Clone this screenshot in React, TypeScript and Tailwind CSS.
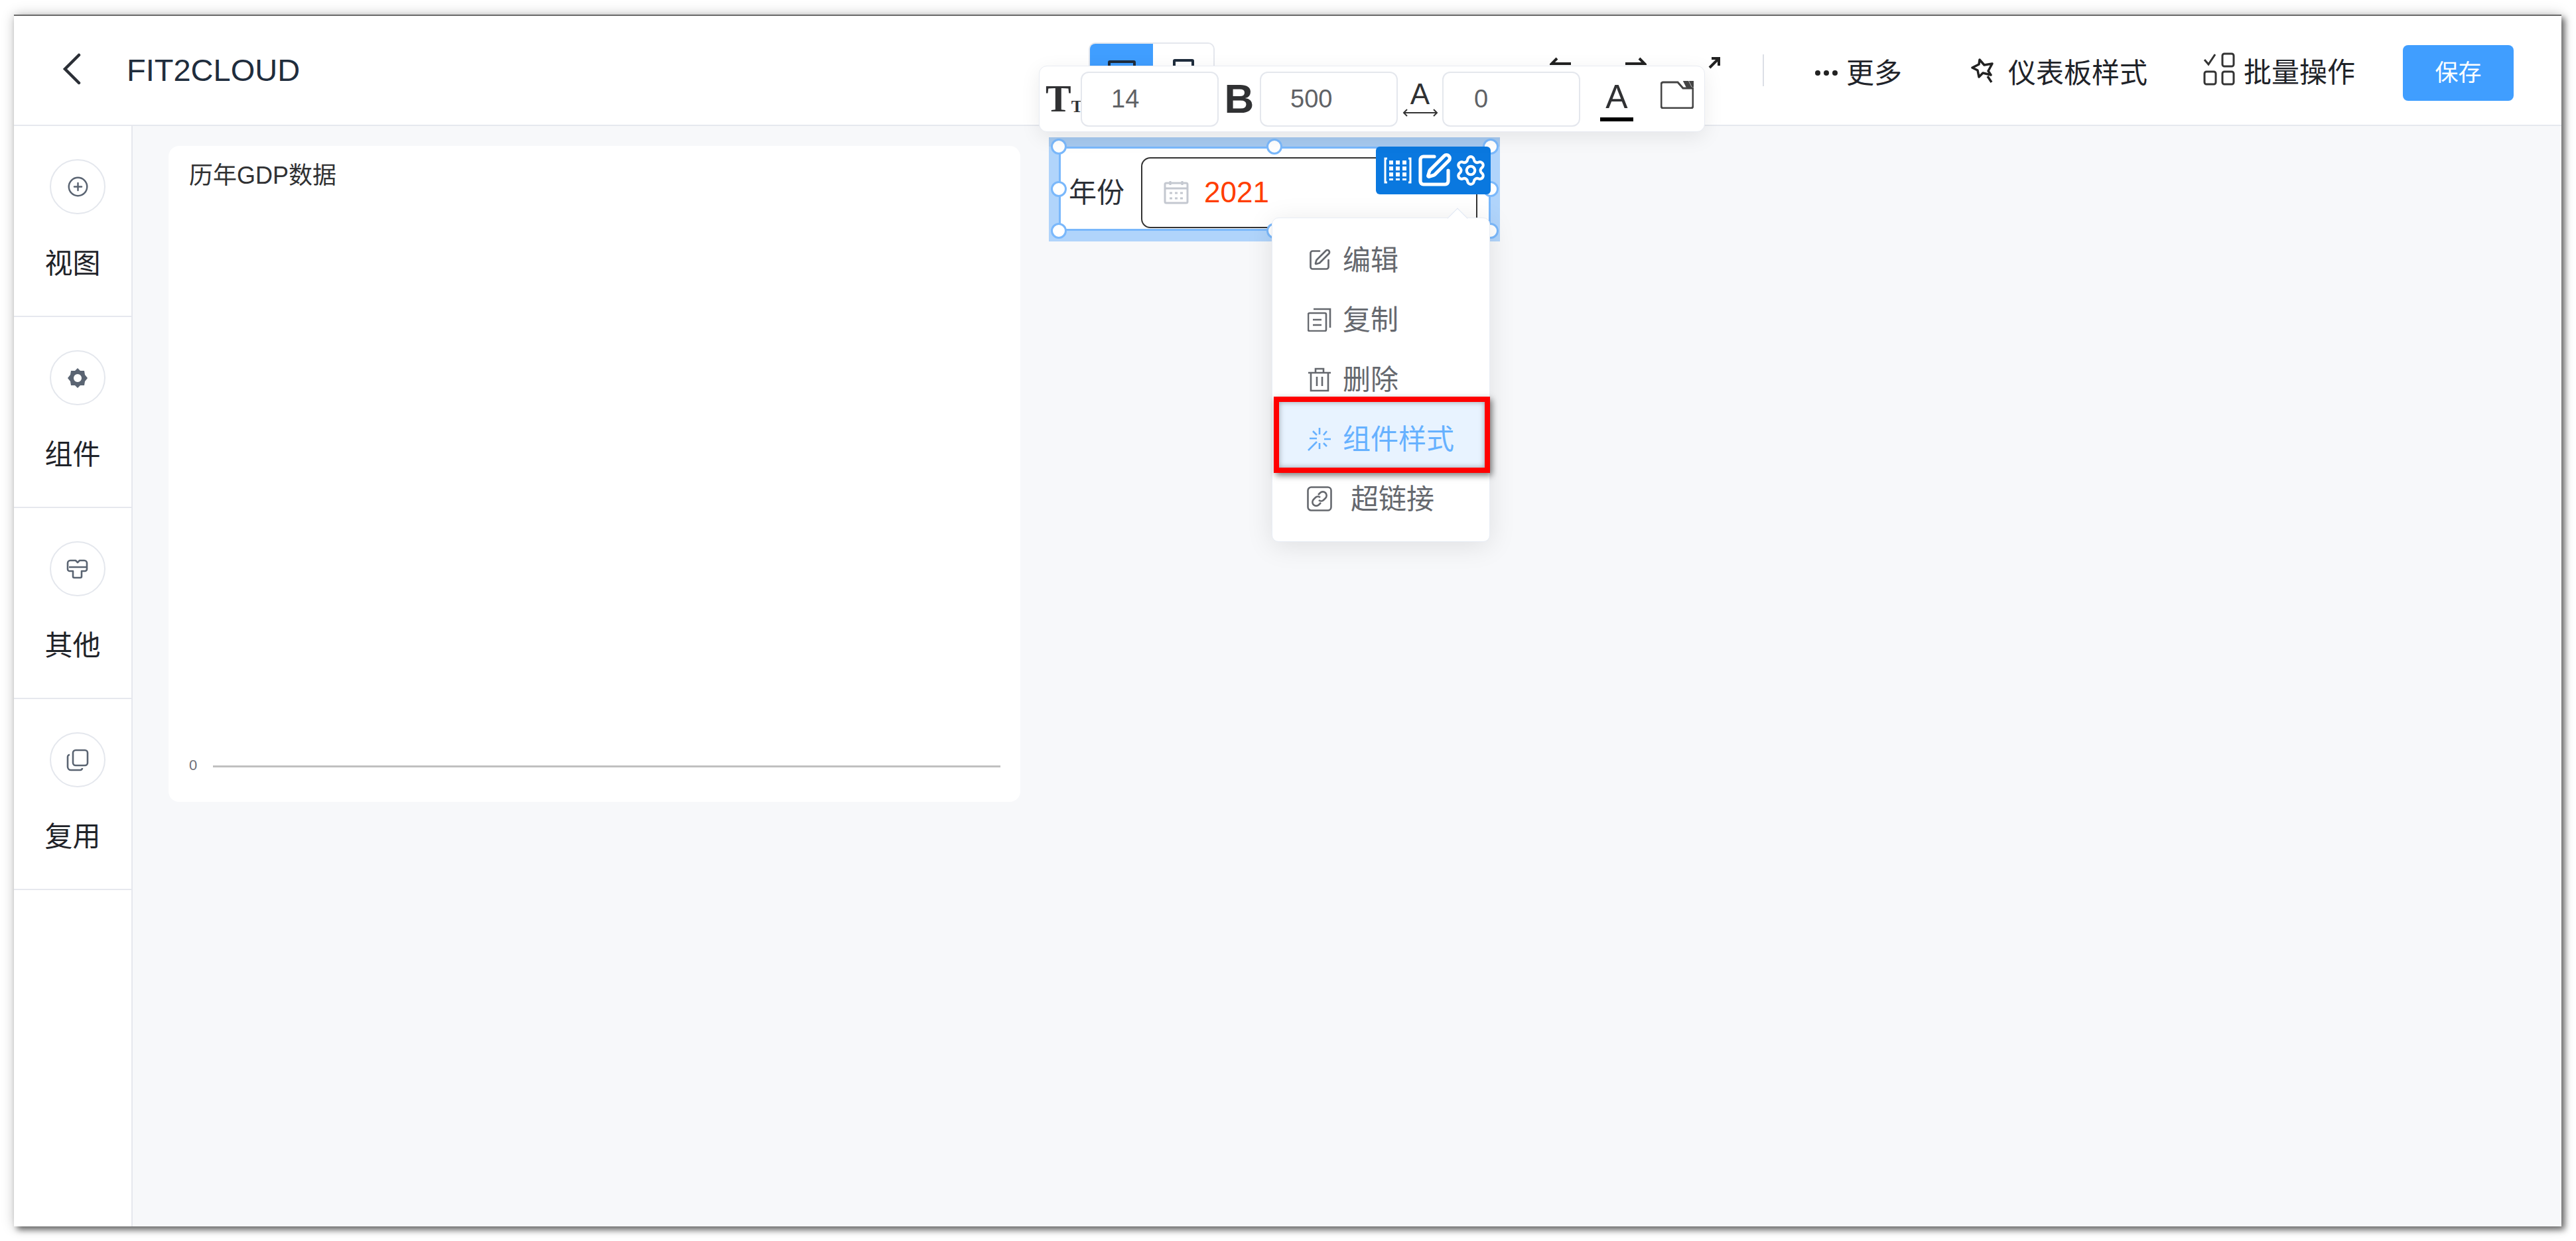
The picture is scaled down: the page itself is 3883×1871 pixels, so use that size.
import { CirclePlus, Settings, SquarePen } from "lucide-react"

function Handle({ className }: { className: string }) {
  return <span className={`absolute w-[24px] h-[24px] rounded-full bg-white border-[3px] border-[#7ab8fb] ${className}`} />
}

function SideItem({ label, children }: { label: string; children: React.ReactNode }) {
  return (
    <div className="h-[288px] border-b-2 border-[#e6e8ee] flex flex-col pt-[50px] shrink-0">
      <div className="ml-[54px] w-[84px] h-[83px] rounded-full border-2 border-[#e4e7ed] flex items-center justify-center text-[#5a6472]">
        {children}
      </div>
      <p className="mt-[50px] text-[42px] leading-[50px] text-center text-[#1f2329]">{label}</p>
    </div>
  )
}

function NumberBox({ value, pad }: { value: string; pad: string }) {
  return (
    <div className={`w-[208px] h-[83px] rounded-[12px] border-2 border-[#e4e7ed] bg-white flex items-center text-[38px] text-[#606266] ${pad}`}>
      {value}
    </div>
  )
}

function MenuRow({ label, children, textClass = "ml-[17px]" }: { label: string; children: React.ReactNode; textClass?: string }) {
  return (
    <div className="h-[90px] flex items-center pl-[53px] text-[#65686e]">
      <span className="w-[36px] h-[36px] flex items-center justify-center shrink-0">{children}</span>
      <span className={`text-[42px] ${textClass}`}>{label}</span>
    </div>
  )
}

export default function App() {
  return (
    <div className="w-[3883px] h-[1871px] bg-white pt-[22px] pl-[21px] overflow-hidden [font-family:'Liberation_Sans','Noto_Sans_CJK_SC',sans-serif]">
      <div className="relative w-[3840px] h-[1827px] flex flex-col bg-white border-t-2 border-[#6a6a6a] shadow-[5px_5px_9px_rgba(0,0,0,0.55),0_0_18px_rgba(0,0,0,0.22)]">
        {/* header */}
        <div className="h-[166px] shrink-0 border-b-2 border-[#e6e8ee] flex items-center">
          <div className="w-[1620px] shrink-0 flex items-center pl-[73px]">
            <svg className="w-[28px] h-[48px] -mt-[4px]" viewBox="0 0 28 48" fill="none" stroke="#2b2f36" strokeWidth="4.5" strokeLinecap="round">
              <path d="M25 3 4 24l21 21" />
            </svg>
            <span className="ml-[69px] text-[47px] text-[#1f2d3d]">FIT2CLOUD</span>
          </div>

          <div className="w-[190px] h-[82px] shrink-0 rounded-[10px] border-2 border-[#e4e7ed] flex overflow-hidden -mt-[2px]">
            <div className="w-[95px] bg-[#409eff] flex justify-center pt-[25px]">
              <div className="w-[42px] h-[34px] border-[4px] border-[#1f2d3d] rounded-[3px]" />
            </div>
            <div className="flex-1 flex justify-center pt-[23px]">
              <div className="w-[32px] h-[42px] border-[4px] border-[#1f2d3d] rounded-[3px]" />
            </div>
          </div>

          <div className="flex-1 flex items-center text-[#1f2329]">
            <svg className="ml-[505px] w-[32px] h-[40px]" viewBox="0 0 32 40" fill="none" stroke="#222" strokeWidth="4">
              <path d="M11 2 3 10h29" />
            </svg>
            <svg className="ml-[82px] w-[32px] h-[40px]" viewBox="0 0 32 40" fill="none" stroke="#222" strokeWidth="4">
              <path d="M21 2l8 8H0" />
            </svg>
            <svg className="ml-[92px] w-[20px] h-[40px] -mt-[6px]" viewBox="0 0 20 40" fill="none" stroke="#222" strokeWidth="4">
              <path d="M6 5h11v11M17 5 3 19" />
            </svg>
            <div className="ml-[63px] w-[2px] h-[48px] bg-[#dcdfe6]" />
            <svg className="ml-[76px] w-[36px] h-[10px] mt-[8px]" viewBox="0 0 36 10" fill="#222">
              <circle cx="5" cy="5" r="4" />
              <circle cx="18" cy="5" r="4" />
              <circle cx="31" cy="5" r="4" />
            </svg>
            <span className="ml-[12px] text-[42px] mt-[8px]">更多</span>
            <svg className="ml-[104px] w-[38px] h-[38px] mt-[2px]" viewBox="0 0 38 38" fill="none" stroke="#222" strokeWidth="3.5" strokeLinejoin="round">
              <path d="M13 2l7 8 12-2-6 11 4 6-12-3-6 6-2-10-8-4 10-5zM25 27l6 9" />
            </svg>
            <span className="ml-[18px] text-[42px] mt-[8px]">仪表板样式</span>
            <svg className="ml-[84px] w-[49px] h-[50px] -mt-[4px]" viewBox="0 0 49 50" fill="none" stroke="#333" strokeWidth="3">
              <path d="M2 11l6 7L18 3" />
              <rect x="29" y="2" width="17" height="19" rx="3" />
              <rect x="2" y="29" width="17" height="19" rx="3" />
              <rect x="29" y="29" width="17" height="19" rx="3" />
            </svg>
            <span className="ml-[12px] text-[42px] mt-[6px]">批量操作</span>
            <button className="ml-[72px] w-[167px] h-[84px] rounded-[8px] bg-[#409eff] text-white text-[35px] mt-[8px]">保存</button>
          </div>
        </div>

        <div className="flex-1 flex min-h-0">
          {/* left rail */}
          <div className="w-[179px] shrink-0 border-r-2 border-[#e6e8ee] flex flex-col">
            <SideItem label="视图">
              <CirclePlus className="w-[33px] h-[33px] text-[#5a6472]" strokeWidth={1.8} />
            </SideItem>
            <SideItem label="组件">
              <svg className="w-[32px] h-[32px]" viewBox="0 0 32 32" fill="#5a6472">
                <path fillRule="evenodd" d="M16 1l4 4h6l1 6 4 5-4 5-1 6h-6l-4 4-4-4H6l-1-6-4-5 4-5 1-6h6zM16 10a6 6 0 1 0 .01 0z" />
              </svg>
            </SideItem>
            <SideItem label="其他">
              <svg className="w-[34px] h-[32px]" viewBox="0 0 34 32" fill="none" stroke="#5a6472" strokeWidth="2.6" strokeLinejoin="round">
                <path d="M7 3h7l3 3 3-3h7a4 4 0 0 1 4 4v9a3 3 0 0 1-3 3h-5v8a2 2 0 0 1-2 2H12a2 2 0 0 1-2-2v-8H5a3 3 0 0 1-3-3V7a4 4 0 0 1 4-4zM4 13h26" />
              </svg>
            </SideItem>
            <SideItem label="复用">
              <svg className="w-[34px] h-[34px]" viewBox="0 0 34 34" fill="none" stroke="#5a6472" strokeWidth="2.6">
                <rect x="10" y="2" width="22" height="23" rx="4" />
                <path d="M5 9a3 3 0 0 0-3 3v15a5 5 0 0 0 5 5h14a3 3 0 0 0 3-3" />
              </svg>
            </SideItem>
          </div>

          {/* dashboard canvas */}
          <div className="relative flex-1 bg-[#f7f8fa]">
            <div className="absolute left-[54px] top-[30px] w-[1284px] h-[989px] bg-white rounded-[16px] flex flex-col">
              <p className="ml-[31px] mt-[22px] text-[36px] leading-[46px] text-[#303133]">历年GDP数据</p>
              <div className="mt-auto mb-[43px] flex items-center pl-[31px] pr-[30px]">
                <span className="text-[22px] leading-[24px] text-[#6e7079] w-[36px]">0</span>
                <div className="flex-1 h-[3px] bg-[#c0c0c0] mt-[3px]" />
              </div>
            </div>

            {/* selected filter */}
            <div className="absolute left-[1381px] top-[17px] w-[680px] h-[157px] bg-[#b0d4fb]">
              <div className="absolute inset-x-0 top-0 h-[14px] bg-[#a6c9ef]" />
              <div className="absolute left-[15px] top-[14px] w-[651px] h-[127px] bg-white border-[3px] border-[#7ab8fb] flex items-center pl-[12px] pt-[11px]">
                <span className="text-[42px] text-[#2b2f36]">年份</span>
                <div className="ml-[25px] w-[507px] h-[107px] rounded-[14px] border-2 border-[#333] flex items-center pl-[32px]">
                  <svg className="w-[38px] h-[36px]" viewBox="0 0 38 36" fill="none" stroke="#c4c8d0" strokeWidth="3">
                    <rect x="2" y="4" width="34" height="30" rx="2" />
                    <path d="M2 12h34M10 1v6M28 1v6" />
                    <path strokeDasharray="4 4" d="M9 19h21M9 27h21" />
                  </svg>
                  <span className="ml-[23px] text-[44px] text-[#ff3d00]">2021</span>
                </div>
              </div>
              <Handle className="left-[3px] top-[2px]" />
              <Handle className="left-[328px] top-[2px]" />
              <Handle className="left-[654px] top-[2px]" />
              <Handle className="left-[3px] top-[66px]" />
              <Handle className="left-[654px] top-[66px]" />
              <Handle className="left-[3px] top-[129px]" />
              <Handle className="left-[328px] top-[129px]" />
              <Handle className="left-[654px] top-[129px]" />

              <div className="absolute left-[493px] top-[14px] w-[173px] h-[72px] rounded-[6px] bg-[#0a78df] flex items-center pl-[12px] text-white">
                <svg className="w-[42px] h-[40px]" viewBox="0 0 42 40" fill="none" stroke="white" strokeWidth="3">
                  <path d="M5 2H2v36h3M37 2h3v36h-3" />
                  <path strokeWidth="6" strokeDasharray="6 3" d="M11 5v30M21 5v30M31 5v30" />
                </svg>
                <SquarePen className="ml-[6px] w-[56px] h-[56px]" strokeWidth={2.2} />
                <Settings className="ml-[2px] w-[50px] h-[50px]" strokeWidth={2} />
              </div>
            </div>

            {/* context menu */}
            <div className="absolute left-[1717px] top-[138px] w-[329px] h-[489px] bg-white rounded-[10px] border border-[#e8edf5] shadow-[0_6px_40px_rgba(0,0,0,0.1)] py-[18px]">
              <div className="absolute left-[268px] -top-[11px] w-[22px] h-[22px] rotate-45 bg-white border-l border-t border-[#dfe6f2]" />
              <MenuRow label="编辑">
                <SquarePen className="w-[36px] h-[36px]" strokeWidth={1.8} />
              </MenuRow>
              <MenuRow label="复制">
                <svg className="w-[36px] h-[36px]" viewBox="0 0 36 36" fill="none" stroke="#65686e" strokeWidth="2.6">
                  <rect x="1" y="8" width="27" height="27" rx="2" />
                  <path d="M9 2h25v28M8 18h13M8 26h13" />
                </svg>
              </MenuRow>
              <MenuRow label="删除">
                <svg className="w-[36px] h-[37px]" viewBox="0 0 36 37" fill="none" stroke="#65686e" strokeWidth="2.6">
                  <path d="M1 8h34M12 8V2h12v6M5 8v27h26V8M14 14v14M22 14v14" />
                </svg>
              </MenuRow>
              <div className="relative">
                <div className="absolute left-[2px] -right-[1px] -top-[19px] h-[115px] border-[8px] border-[#ff0000] bg-[#e8f3ff] shadow-[3px_4px_9px_rgba(0,0,0,0.5),inset_0_0_9px_rgba(0,0,0,0.35)]" />
                <div className="relative h-[90px] flex items-center pl-[53px] text-[#66b1ff]">
                  <svg className="w-[36px] h-[36px] shrink-0" viewBox="0 0 36 36" fill="none" stroke="#66b1ff" strokeWidth="2.6">
                    <path d="M18 1v10M18 24v9M25 18h10M3 17h11M8 6l6 6M29 6l-5 6M24 24l5 5M14 22 1 35" />
                  </svg>
                  <span className="ml-[17px] text-[42px]">组件样式</span>
                </div>
              </div>
              <MenuRow label="超链接" textClass="ml-[29px]">
                <svg className="w-[38px] h-[38px] shrink-0" viewBox="0 0 38 38" fill="none" stroke="#65686e" strokeWidth="2.6">
                  <rect x="1.5" y="1.5" width="35" height="35" rx="5" />
                  <path d="M17 13l3-3a5 5 0 0 1 8 8l-3 3a5 5 0 0 1-7 0M21 25l-3 3a5 5 0 0 1-8-8l3-3a5 5 0 0 1 7 0" />
                </svg>
              </MenuRow>
            </div>
          </div>
        </div>

        {/* floating style bar */}
        <div className="absolute left-[1545px] top-[75px] w-[1004px] h-[100px] rounded-[12px] bg-white border border-[#e8ebf2] shadow-[0_8px_30px_rgba(0,0,0,0.08)] flex items-center pl-[9px]">
          <span className="w-[53px] text-[#303133] [font-family:'Liberation_Serif',serif] font-bold flex items-end leading-none">
            <span className="text-[58px] leading-[44px]">T</span>
            <span className="text-[26px] leading-[20px]">T</span>
          </span>
          <NumberBox value="14" pad="pl-[44px]" />
          <span className="w-[62px] text-center text-[62px] font-bold leading-none text-[#303133]">B</span>
          <NumberBox value="500" pad="pl-[44px]" />
          <div className="w-[67px] flex flex-col items-center text-[#303133]">
            <span className="text-[44px] leading-[42px]">A</span>
            <svg className="w-[54px] h-[14px]" viewBox="0 0 54 14" fill="none" stroke="#333" strokeWidth="2">
              <path d="M2 7h50M7 2 2 7l5 5M47 2l5 5-5 5" />
            </svg>
          </div>
          <NumberBox value="0" pad="pl-[46px]" />
          <div className="ml-[30px] w-[50px] flex flex-col items-center text-[#303133] mt-[8px]">
            <span className="text-[50px] leading-[46px]">A</span>
            <div className="mt-[8px] w-[50px] h-[6px] bg-black" />
          </div>
          <svg className="ml-[41px] w-[50px] h-[42px] -mt-[12px]" viewBox="0 0 50 42" fill="none" stroke="#444" strokeWidth="3">
            <path d="M26 2H4a3 3 0 0 0-3 3v33a3 3 0 0 0 3 3h42a3 3 0 0 0 3-3V11H34z" />
            <path fill="#444" d="M36 1h5l4 8h-5zM45 1h4v8z" />
          </svg>
        </div>
      </div>
    </div>
  )
}
